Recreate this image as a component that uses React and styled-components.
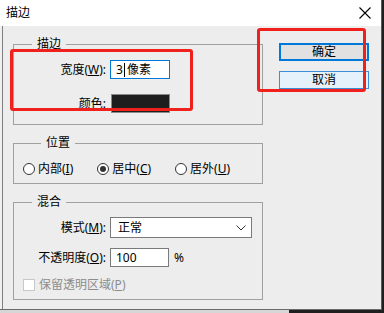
import React from 'react';
import styled, { createGlobalStyle } from 'styled-components';

const GlobalStyle = createGlobalStyle`
    body {
        margin: 0;
        font-family: "Noto Sans", "Noto Sans CJK SC", "Liberation Sans", sans-serif;
        font-size: 12px;
        color: #000;
    }
`;

function App() {
    return (
        <Page>
            <GlobalStyle />
            <Window>
                <TitleBar>
                    <Title>描边</Title>
                    <svg width="12" height="12" viewBox="0 0 12 12">
                        <path d="M0.5 0.5 L11.5 11.5 M11.5 0.5 L0.5 11.5" stroke="#000" strokeWidth="1.1" fill="none" />
                    </svg>
                </TitleBar>
                <Body>
                    <LeftCol>
                        <Group $pad="8px 0 11px">
                            <Legend>描边</Legend>
                            <FormGrid $gap="15px">
                                <Label>宽度(<Key>W</Key>):</Label>
                                <TextBox $focused $w="60px">
                                    3<Caret />像素
                                </TextBox>
                                <Label>颜色:</Label>
                                <Swatch />
                            </FormGrid>
                        </Group>

                        <Group $pad="10px 0 6px 9px">
                            <Legend>位置</Legend>
                            <RadioRow>
                                <RadioItem>
                                    <Radio />
                                    <span>内部(<Key>I</Key>)</span>
                                </RadioItem>
                                <RadioItem>
                                    <Radio $checked />
                                    <span>居中(<Key>C</Key>)</span>
                                </RadioItem>
                                <RadioItem>
                                    <Radio />
                                    <span>居外(<Key>U</Key>)</span>
                                </RadioItem>
                            </RadioRow>
                        </Group>

                        <Group $pad="7px 0 8px">
                            <Legend>混合</Legend>
                            <FormGrid $gap="10px">
                                <Label>模式(<Key>M</Key>):</Label>
                                <Select>
                                    <span>正常</span>
                                    <svg width="10" height="6" viewBox="0 0 10 6">
                                        <path d="M0.5 0.5 L5 5 L9.5 0.5" stroke="#333" strokeWidth="1" fill="none" />
                                    </svg>
                                </Select>
                                <Label>不透明度(<Key>O</Key>):</Label>
                                <InputLine>
                                    <TextBox $w="59px">100</TextBox>
                                    <Unit>%</Unit>
                                </InputLine>
                            </FormGrid>
                            <CheckRow>
                                <CheckBox />
                                <span>保留透明区域(<Key>P</Key>)</span>
                            </CheckRow>
                        </Group>
                    </LeftCol>

                    <RightCol>
                        <Button $primary>确定</Button>
                        <Button>取消</Button>
                    </RightCol>
                </Body>
            </Window>
            <BottomStrip />

            <RedBox $x={10} $y={49} $w={183} $h={62} />
            <RedBox $x={257} $y={28} $w={109} $h={64} />
        </Page>
    );
}

const Page = styled.div`
    position: relative;
    width: 384px;
    height: 313px;
    background: #1f1f1f;
    overflow: hidden;
`;

const Window = styled.div`
    width: 382px;
    height: 310px;
    box-sizing: border-box;
    background: #f0f0f0;
    border-right: 1px solid #5c5c5c;
    border-bottom: 1px solid #6a6a6a;
    display: flex;
    flex-direction: column;
`;

const TitleBar = styled.div`
    height: 26px;
    flex-shrink: 0;
    background: #fff;
    display: flex;
    align-items: center;
    justify-content: space-between;
    padding: 0 10px 0 6px;
`;

const Title = styled.span`
    font-size: 12px;
    line-height: 16px;
`;

const Body = styled.div`
    flex: 1;
    display: flex;
    margin-left: 2px;
    border-left: 1px solid #7f7f7f;
    background: #ededed;
    padding: 10px 0 0 10px;
`;

const LeftCol = styled.div`
    width: 250px;
    display: flex;
    flex-direction: column;
    gap: 10px;
`;

const Group = styled.fieldset`
    margin: 0;
    padding: ${(props) => props.$pad};
    border: 1px solid #a0a0a0;
    min-width: 0;
`;

const Legend = styled.legend`
    margin-left: 18px;
    padding: 0 5px;
    font-size: 12px;
    line-height: 16px;
`;

const FormGrid = styled.div`
    display: grid;
    grid-template-columns: 92px auto;
    column-gap: 4px;
    row-gap: ${(props) => props.$gap};
    align-items: center;
`;

const Label = styled.span`
    text-align: right;
    line-height: 16px;
    white-space: nowrap;
`;

const Key = styled.span`
    text-decoration: underline;
    text-underline-offset: 1px;
`;

const TextBox = styled.div`
    width: ${(props) => props.$w};
    height: 19px;
    box-sizing: border-box;
    background: #fff;
    border: 1px solid ${(props) => props.$focused ? '#0078d7' : '#7a7a7a'};
    padding: 0 0 0 5px;
    display: flex;
    align-items: center;
    line-height: 16px;
`;

const Caret = styled.span`
    display: inline-block;
    width: 1px;
    height: 14px;
    background: #000;
    margin: 0 2px 0 1px;
`;

const Swatch = styled.div`
    width: 59px;
    height: 19px;
    box-sizing: border-box;
    margin-left: 1px;
    background: #1e1e1e;
    border: 1px solid #8a8a8a;
`;

const RadioRow = styled.div`
    display: flex;
    align-items: center;
    gap: 24px;
    height: 16px;
`;

const RadioItem = styled.label`
    display: flex;
    align-items: center;
    gap: 3px;
    line-height: 16px;
`;

const Radio = styled.span`
    width: 12px;
    height: 12px;
    box-sizing: border-box;
    border-radius: 50%;
    border: 1px solid #333;
    background: #fff;
    display: flex;
    align-items: center;
    justify-content: center;
    &::after {
        content: '';
        width: 6px;
        height: 6px;
        border-radius: 50%;
        background: ${(props) => props.$checked ? '#333' : 'transparent'};
    }
`;

const Select = styled.div`
    width: 142px;
    height: 21px;
    box-sizing: border-box;
    background: #fff;
    border: 1px solid #7a7a7a;
    display: flex;
    align-items: center;
    justify-content: space-between;
    padding: 0 5px 0 7px;
    line-height: 16px;
`;

const InputLine = styled.div`
    display: flex;
    align-items: center;
    gap: 5px;
`;

const Unit = styled.span`
    line-height: 16px;
`;

const CheckRow = styled.div`
    display: flex;
    align-items: center;
    gap: 4px;
    margin-top: 11px;
    padding-left: 9px;
    height: 13px;
    color: #8c8c8c;
    line-height: 16px;
`;

const CheckBox = styled.span`
    width: 12px;
    height: 12px;
    box-sizing: border-box;
    border: 1px solid #c8c8c8;
    background: #fff;
`;

const RightCol = styled.div`
    margin-left: 16px;
    padding-top: 7px;
    display: flex;
    flex-direction: column;
    gap: 10px;
`;

const Button = styled.div`
    width: 90px;
    height: 18px;
    box-sizing: border-box;
    border: ${(props) => props.$primary ? '2px solid #0078d7' : '1px solid #3d8ed9'};
    background: ${(props) => props.$primary ? '#e1e1e1' : '#e5f1fb'};
    display: flex;
    align-items: center;
    justify-content: center;
    line-height: 16px;
`;

const BottomStrip = styled.div`
    width: 289px;
    height: 3px;
    background: #d6d6d6;
`;

const RedBox = styled.div`
    position: absolute;
    left: ${(props) => props.$x}px;
    top: ${(props) => props.$y}px;
    width: ${(props) => props.$w}px;
    height: ${(props) => props.$h}px;
    box-sizing: border-box;
    border: 3px solid #f0211d;
    border-radius: 3px;
    pointer-events: none;
`;

export default App;
